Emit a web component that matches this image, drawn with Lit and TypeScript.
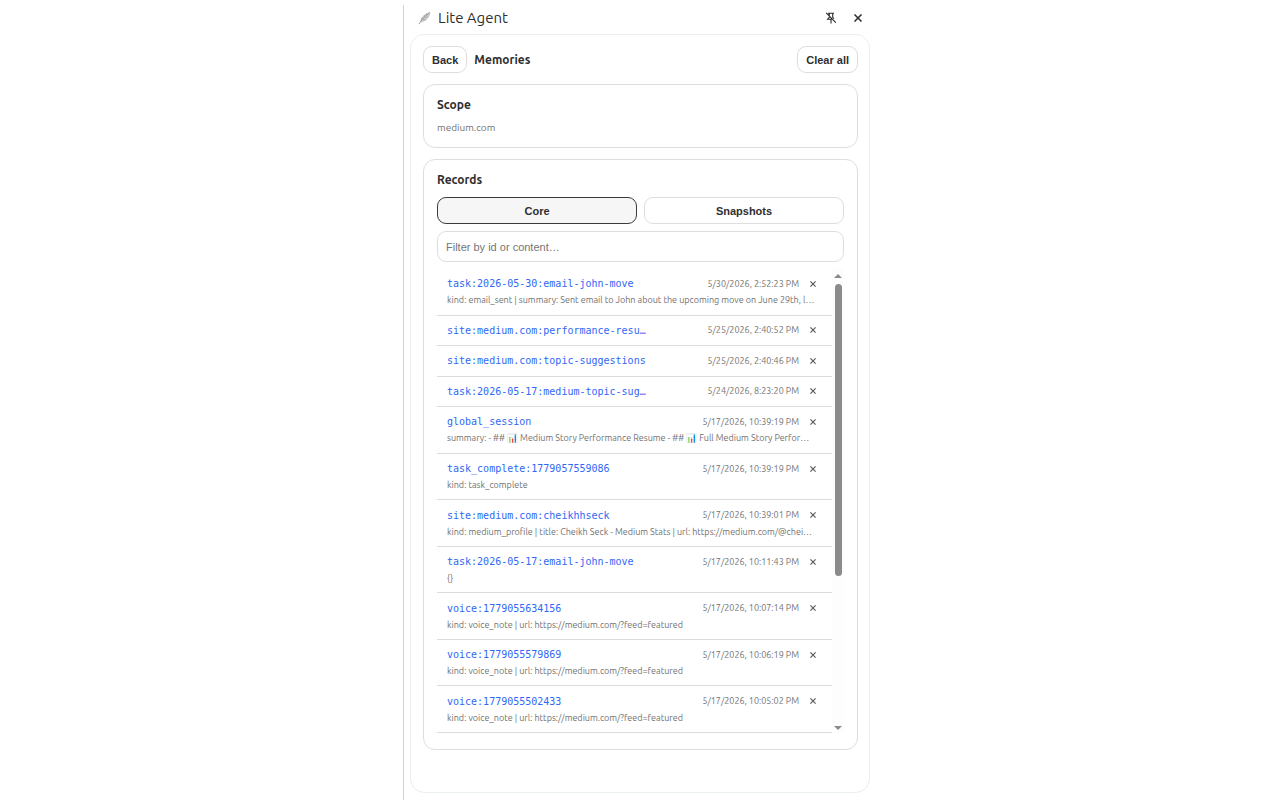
import { LitElement, html, css, nothing } from "lit";
import { customElement, property, state } from "lit/decorators.js";

interface MemoryRecord {
  id: string;
  time: string;
  preview?: string;
}

const RECORDS: MemoryRecord[] = [
  {
    id: "task:2026-05-30:email-john-move",
    time: "5/30/2026, 2:52:23 PM",
    preview: "kind: email_sent | summary: Sent email to John about the upcoming move on June 29th, letting him know the details",
  },
  { id: "site:medium.com:performance-resume", time: "5/25/2026, 2:40:52 PM" },
  { id: "site:medium.com:topic-suggestions", time: "5/25/2026, 2:40:46 PM" },
  { id: "task:2026-05-17:medium-topic-suggestions", time: "5/24/2026, 8:23:20 PM" },
  {
    id: "global_session",
    time: "5/17/2026, 10:39:19 PM",
    preview: "summary: - ## 📊 Medium Story Performance Resume - ## 📊 Full Medium Story Performance Resume",
  },
  { id: "task_complete:1779057559086", time: "5/17/2026, 10:39:19 PM", preview: "kind: task_complete" },
  {
    id: "site:medium.com:cheikhhseck",
    time: "5/17/2026, 10:39:01 PM",
    preview: "kind: medium_profile | title: Cheikh Seck - Medium Stats | url: https://medium.com/@cheikhhseck",
  },
  { id: "task:2026-05-17:email-john-move", time: "5/17/2026, 10:11:43 PM", preview: "{}" },
  { id: "voice:1779055634156", time: "5/17/2026, 10:07:14 PM", preview: "kind: voice_note | url: https://medium.com/?feed=featured" },
  { id: "voice:1779055579869", time: "5/17/2026, 10:06:19 PM", preview: "kind: voice_note | url: https://medium.com/?feed=featured" },
  { id: "voice:1779055502433", time: "5/17/2026, 10:05:02 PM", preview: "kind: voice_note | url: https://medium.com/?feed=featured" },
];

@customElement("memory-row")
class MemoryRow extends LitElement {
  @property({ attribute: false }) record!: MemoryRecord;

  static styles = css`
    :host {
      display: flex;
      flex-direction: column;
      justify-content: center;
      gap: 1px;
      flex: 1 0 auto;
      padding: 6px 10px;
      border-bottom: 1px solid #dcdcde;
      box-sizing: border-box;
      min-width: 0;
    }
    .top {
      display: flex;
      align-items: center;
      height: 17px;
    }
    .id {
      max-width: 200px;
      overflow: hidden;
      text-overflow: ellipsis;
      white-space: nowrap;
      color: #2f67f6;
      text-decoration: none;
      font: 10px/17px "DejaVu Sans Mono", monospace;
    }
    .time {
      margin-left: auto;
      white-space: nowrap;
      color: #727272;
      font-size: 9px;
    }
    .remove {
      width: 18px;
      height: 17px;
      margin-left: 5px;
      padding: 0;
      display: grid;
      place-items: center;
      border: 0;
      background: none;
      color: #5c5c5c;
    }
    .preview {
      padding-right: 6px;
      overflow: hidden;
      text-overflow: ellipsis;
      white-space: nowrap;
      color: #727272;
      font-size: 9px;
      line-height: 15px;
    }
  `;

  render() {
    const { id, time, preview } = this.record;
    return html`
      <div class="top">
        <a class="id" href="#">${id}</a>
        <span class="time">${time}</span>
        <button class="remove" aria-label="Delete record">
          <svg width="6" height="6" viewBox="0 0 6 6" stroke="currentColor" stroke-width="1.2">
            <path d="M.4 .4L5.6 5.6M5.6 .4L.4 5.6" />
          </svg>
        </button>
      </div>
      ${preview ? html`<div class="preview">${preview}</div>` : nothing}
    `;
  }
}

@customElement("app-root")
class AppRoot extends LitElement {
  @state() private tab = "core";

  static styles = css`
    :host {
      display: flex;
      justify-content: center;
      box-sizing: border-box;
      min-height: 100vh;
      padding-top: 5px;
      background: #fff;
      color: #2e2e30;
      font-family: Ubuntu, "Noto Sans", sans-serif;
    }
    .panel {
      display: flex;
      flex-direction: column;
      box-sizing: border-box;
      width: 100%;
      max-width: 474px;
      padding: 0 7px 7px 6px;
      border-left: 1px solid #d3d3d5;
    }
    .bar {
      display: flex;
      align-items: center;
      gap: 7px;
      height: 29px;
      padding: 0 2px 4px 8px;
      box-sizing: border-box;
    }
    .name {
      flex: 1;
      font-size: 15px;
      font-weight: 400;
      margin: 0;
    }
    .icon {
      display: grid;
      place-items: center;
      width: 20px;
      height: 20px;
      padding: 0;
      border: 0;
      background: none;
      color: #2b2b2d;
    }
    .page {
      flex: 1;
      display: flex;
      flex-direction: column;
      padding: 11px 11px 11px 12px;
      border: 1px solid #eaefef;
      border-radius: 14px;
    }
    .head {
      display: flex;
      align-items: center;
      gap: 7px;
      margin-bottom: 11px;
    }
    .title {
      flex: 1;
      margin: 0;
      font-size: 12px;
      font-weight: 700;
    }
    .btn {
      height: 27px;
      padding: 0 8px;
      border: 1px solid #dedee0;
      border-radius: 9px;
      background: #fff;
      color: #2e2e30;
      font: 700 11px "Liberation Sans", Arial, sans-serif;
    }
    .btn.active {
      border-color: #3b3b3d;
      background: #f6f6f6;
    }
    .card {
      padding: 12px 13px;
      border: 1px solid #dedee0;
      border-radius: 12px;
    }
    .card + .card {
      margin-top: 11px;
      padding-bottom: 16px;
    }
    .label {
      margin: 0 0 8px;
      font-size: 12px;
      line-height: 16px;
      font-weight: 700;
    }
    .scope {
      margin: 0;
      font-size: 10px;
      line-height: 14px;
      color: #727272;
    }
    .tabs {
      display: grid;
      grid-template-columns: 1fr 1fr;
      gap: 7px;
      margin: 9px 0 7px;
    }
    .filter {
      display: block;
      box-sizing: border-box;
      width: 100%;
      height: 31px;
      padding: 0 8px;
      border: 1px solid #dedee0;
      border-radius: 9px;
      background: #fff;
      color: #2e2e30;
      font: 11px "Liberation Sans", Arial, sans-serif;
    }
    .filter::placeholder {
      color: #757575;
    }
    .scroller {
      display: flex;
      height: 58vh;
      margin-top: 7px;
    }
    .list {
      flex: 1;
      min-width: 0;
      display: flex;
      flex-direction: column;
      overflow-y: auto;
      scrollbar-width: none;
    }
    .track {
      display: flex;
      flex-direction: column;
      align-items: center;
      gap: 6px;
      width: 12px;
      padding: 5px 0 3px;
      box-sizing: border-box;
      background: #fdfdfd;
      color: #8b8b8b;
    }
    .rail {
      flex: 1;
    }
    .thumb {
      width: 7px;
      height: 64%;
      border-radius: 4px;
      background: #8b8b8b;
    }
  `;

  private tabButton(key: string, text: string) {
    return html`<button
      class="btn ${this.tab === key ? "active" : ""}"
      role="tab"
      aria-selected=${this.tab === key}
      @click=${() => (this.tab = key)}
    >${text}</button>`;
  }

  render() {
    return html`
      <main class="panel">
        <header class="bar">
          <svg width="13" height="14" viewBox="0 0 13 14" fill="none">
            <path d="M3 11C2.600 7.500 5.500 3.500 12 1.200C11.800 5.500 8.500 10 3 11Z" fill="#d2d2d2" stroke="#b4b4b4" stroke-width=".6" />
            <path d="M.8 13.200C3 9.500 6.500 5.500 11 2.200" stroke="#858585" stroke-width=".8" />
            <path d="M4.200 8.800L4 6.300M6.200 6.700L6.300 4M5 8.600L8 8.400M7.200 6.300L10 5.800M8.300 4.800L8.600 2.900" stroke="#989898" stroke-width=".6" />
          </svg>
          <h1 class="name">Lite Agent</h1>
          <button class="icon" aria-label="Unpin">
            <svg width="12" height="12" viewBox="0 0 12 12" fill="none" stroke="currentColor" stroke-width="1.1">
              <path d="M3 1.200H9M4.300 1.200V5.300L2.600 7.200H7.500M7.700 1.200V5.300L9 6.700M6 7.200V11.500M1.200 .8L10.800 10.600" />
            </svg>
          </button>
          <button class="icon" aria-label="Close">
            <svg width="8" height="8" viewBox="0 0 8 8" stroke="currentColor" stroke-width="1.500">
              <path d="M.5 .5L7.500 7.500M7.500 .5L.5 7.500" />
            </svg>
          </button>
        </header>
        <section class="page">
          <div class="head">
            <button class="btn">Back</button>
            <h2 class="title">Memories</h2>
            <button class="btn">Clear all</button>
          </div>
          <section class="card">
            <h3 class="label">Scope</h3>
            <p class="scope">medium.com</p>
          </section>
          <section class="card">
            <h3 class="label">Records</h3>
            <div class="tabs" role="tablist">
              ${this.tabButton("core", "Core")}${this.tabButton("snapshots", "Snapshots")}
            </div>
            <input class="filter" type="text" aria-label="Filter records" placeholder="Filter by id or content…" />
            <div class="scroller">
              <div class="list">
                ${RECORDS.map((r) => html`<memory-row .record=${r}></memory-row>`)}
              </div>
              <div class="track" aria-hidden="true">
                <svg width="8" height="4" viewBox="0 0 8 4" fill="currentColor"><path d="M0 4L4 0L8 4Z" /></svg>
                <div class="thumb"></div>
                <div class="rail"></div>
                <svg width="8" height="4" viewBox="0 0 8 4" fill="currentColor"><path d="M0 0L4 4L8 0Z" /></svg>
              </div>
            </div>
          </section>
        </section>
      </main>
    `;
  }
}
